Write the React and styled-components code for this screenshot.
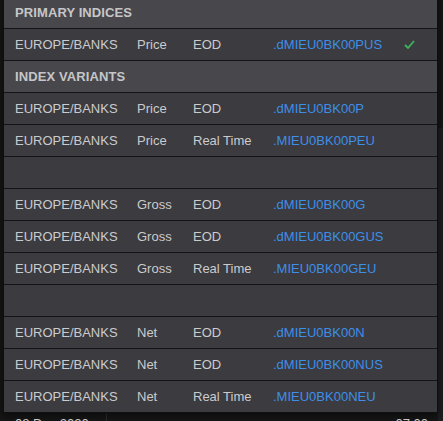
import React from "react";
import styled, { createGlobalStyle } from "styled-components";

const Global = createGlobalStyle`
  html, body { margin: 0; padding: 0; }
  body {
    background: #141414;
    font-family: "Liberation Sans", Arial, sans-serif;
    overflow: hidden;
  }
`;

const Screen = styled.div`
  position: relative;
  width: 443px;
  height: 421px;
  overflow: hidden;
  background: #151515;
  display: flex;
  flex-direction: column;
  justify-content: flex-end;
`;

const BackRow = styled.div`
  display: grid;
  grid-template-columns: 107px 1fr auto;
  height: 24px;
  margin-bottom: -16px;
  align-items: start;
  color: #d0d0d0;
  font-size: 13px;
  line-height: 16px;
`;

const BackCell = styled.div`
  padding: 3px 15px 0 15px;
  border-right: ${(p) => (p.$divider ? "1px solid #2a2a2a" : "none")};
  height: 100%;
`;

const SideStrip = styled.div`
  position: absolute;
  right: 0;
  top: 128px;
  width: 5px;
  bottom: 0;
  background: #1d1d1f;
`;

const Panel = styled.div`
  position: absolute;
  left: 3px;
  top: -4px;
  width: 433px;
  border: 1px solid #0f0f10;
  background: #3b3a40;
  display: flex;
  flex-direction: column;
  box-shadow: 0 2px 6px rgba(0, 0, 0, 0.5);
`;

const Row = styled.div`
  display: grid;
  grid-template-columns: 122px 56px 80px 1fr 33px;
  align-items: center;
  height: 31px;
  padding-left: 11px;
  background: ${(p) => (p.$header ? "#48474c" : "#3c3b40")};
  border-bottom: 1px solid #141416;
  font-size: 13px;
  color: #cbcbcd;
  &:last-child { border-bottom: none; }
`;

const HeaderText = styled.div`
  grid-column: 1 / -1;
  font-weight: bold;
  color: #c6c6c8;
  letter-spacing: 0.1px;
`;

const Cell = styled.div`
  white-space: nowrap;
`;

const Code = styled.div`
  color: #3d8fe8;
  white-space: nowrap;
`;

const Check = styled.div`
  display: flex;
  align-items: center;
  justify-content: flex-start;
`;

const CheckIcon = () => (
  <svg width="11" height="9" viewBox="0 0 11 9">
    <path d="M1 5 L4 8 L10 1" fill="none" stroke="#3bb55b" strokeWidth="1.8" />
  </svg>
);

const sections = [
  { header: "PRIMARY INDICES" },
  { r: ["EUROPE/BANKS", "Price", "EOD", ".dMIEU0BK00PUS"], check: true },
  { header: "INDEX VARIANTS" },
  { r: ["EUROPE/BANKS", "Price", "EOD", ".dMIEU0BK00P"] },
  { r: ["EUROPE/BANKS", "Price", "Real Time", ".MIEU0BK00PEU"] },
  { empty: true },
  { r: ["EUROPE/BANKS", "Gross", "EOD", ".dMIEU0BK00G"] },
  { r: ["EUROPE/BANKS", "Gross", "EOD", ".dMIEU0BK00GUS"] },
  { r: ["EUROPE/BANKS", "Gross", "Real Time", ".MIEU0BK00GEU"] },
  { empty: true },
  { r: ["EUROPE/BANKS", "Net", "EOD", ".dMIEU0BK00N"] },
  { r: ["EUROPE/BANKS", "Net", "EOD", ".dMIEU0BK00NUS"] },
  { r: ["EUROPE/BANKS", "Net", "Real Time", ".MIEU0BK00NEU"] },
];

export default function App() {
  return (
    <>
      <Global />
      <Screen>
        <SideStrip />
        <BackRow>
          <BackCell $divider>08 Dec 2020</BackCell>
          <BackCell />
          <BackCell>07:00</BackCell>
        </BackRow>
        <Panel>
          {sections.map((s, i) => {
            if (s.header)
              return (
                <Row key={i} $header>
                  <HeaderText>{s.header}</HeaderText>
                </Row>
              );
            if (s.empty) return <Row key={i} />;
            return (
              <Row key={i}>
                <Cell>{s.r[0]}</Cell>
                <Cell>{s.r[1]}</Cell>
                <Cell>{s.r[2]}</Cell>
                <Code>{s.r[3]}</Code>
                <Check>{s.check && <CheckIcon />}</Check>
              </Row>
            );
          })}
        </Panel>
      </Screen>
    </>
  );
}
